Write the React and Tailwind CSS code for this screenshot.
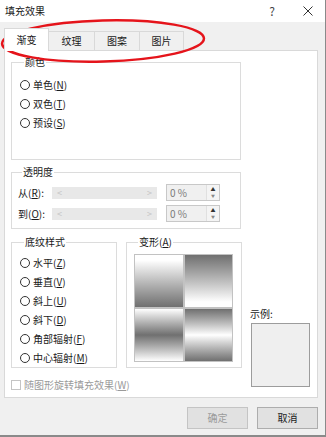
import { useState } from "react";

const FONT = { fontFamily: '"Noto Sans CJK SC", "Microsoft YaHei", sans-serif' };

function Radio({ label, hot }) {
  return (
    <div className="flex items-center h-[19px]">
      <span className="w-[10px] h-[10px] rounded-full border border-[#333333] bg-white mr-[3px] shrink-0"></span>
      <span>
        {label}(<u>{hot}</u>)
      </span>
    </div>
  );
}

function Group({ title, className, children }) {
  return (
    <fieldset className={`border border-[#dcdcdc] ${className}`}>
      <legend className="ml-[4px] px-[1px] text-[10px] leading-[14px]">{title}</legend>
      {children}
    </fieldset>
  );
}

function SliderRow({ label, hot }) {
  return (
    <div className="flex items-center h-[21px]">
      <span className="w-[34px]">
        {label}(<u>{hot}</u>):
      </span>
      <div className="w-[105px] h-[12px] bg-[#e8e8e8] flex items-center justify-between px-[5px] text-[#c4c4c4] text-[9px] leading-none">
        <span>&lt;</span>
        <span>&gt;</span>
      </div>
      <div className="ml-[9px] w-[54px] h-[17px] border border-[#c8c8c8] bg-[#f0f0f0] flex">
        <span className="flex-1 pl-[3px] text-[#7a7a7a] leading-[15px]">0 %</span>
        <div className="w-[13px] flex flex-col border-l border-[#e0e0e0] bg-[#f4f4f4]">
          <div className="flex-1 flex items-center justify-center text-[5px] text-[#333] leading-none">▲</div>
          <div className="flex-1 flex items-center justify-center text-[4px] text-[#888] leading-none">▼</div>
        </div>
      </div>
    </div>
  );
}

export default function App() {
  const [tab] = useState("渐变");
  const tabs = [
    { name: "渐变", w: "w-[45px]" },
    { name: "纹理", w: "w-[46px]" },
    { name: "图案", w: "w-[45px]" },
    { name: "图片", w: "w-[44px]" },
  ];

  return (
    <div
      className="relative w-[326px] h-[437px] bg-[#f0f0f0] border-r border-b-2 border-[#8a8a8a] text-[10px] leading-[14px] text-[#1a1a1a] overflow-hidden"
      style={FONT}
    >
      {/* title bar */}
      <div className="h-[22px] bg-white flex items-center pl-[5px] pr-[12px]">
        <span className="flex-1">填充效果</span>
        <span className="text-[12px] text-[#444] mr-[28px]">?</span>
        <svg width="10" height="10" viewBox="0 0 10 10" className="mb-[1px]">
          <path d="M0.5 0.5 L9.5 9.5 M9.5 0.5 L0.5 9.5" stroke="#333" strokeWidth="1" />
        </svg>
      </div>

      {/* tabs */}
      <div className="flex items-end mt-[6px] mx-[4px] h-[22px]">
        {tabs.map((t) =>
          t.name === tab ? (
            <div
              key={t.name}
              className={`${t.w} h-[23px] -mb-[1px] relative z-10 bg-white border border-b-0 border-[#d9d9d9] flex items-center justify-center`}
            >
              {t.name}
            </div>
          ) : (
            <div
              key={t.name}
              className={`${t.w} h-[19px] bg-[#f0f0f0] border border-l-0 border-b-0 border-[#d9d9d9] flex items-center justify-center`}
            >
              {t.name}
            </div>
          )
        )}
      </div>

      {/* panel */}
      <div className="mx-[4px] w-[314px] h-[348px] bg-white border border-[#d9d9d9] pl-[6px] pt-[4px]">
        <Group title="颜色" className="w-[230px] h-[105px] pl-[8px] pt-[6px]">
          <Radio label="单色" hot="N" />
          <Radio label="双色" hot="T" />
          <Radio label="预设" hot="S" />
        </Group>

        <Group title="透明度" className="w-[230px] h-[64px] mt-[5px] pl-[6px] pt-[3px]">
          <SliderRow label="从" hot="R" />
          <SliderRow label="到" hot="O" />
        </Group>

        <div className="flex mt-[6px]">
          <div className="flex flex-col">
            <div className="flex">
              <Group title="底纹样式" className="w-[106px] h-[133px] pl-[8px] pt-[4px]">
                <Radio label="水平" hot="Z" />
                <Radio label="垂直" hot="V" />
                <Radio label="斜上" hot="U" />
                <Radio label="斜下" hot="D" />
                <Radio label="角部辐射" hot="F" />
                <Radio label="中心辐射" hot="M" />
              </Group>
              <Group title={<>变形(<u>A</u>)</>} className="ml-[9px] w-[116px] h-[133px] pl-[7px] pt-[5px]">
                <div className="w-[99px] h-[108px] grid grid-cols-2 grid-rows-2 gap-[2px] p-[1px] bg-[#c2c2c2]">
                  <div className="bg-linear-to-b from-white from-10% to-[#707070]"></div>
                  <div className="bg-linear-to-b from-[#707070] to-white to-90%"></div>
                  <div className="bg-linear-to-b from-white via-[#707070] to-white"></div>
                  <div className="bg-linear-to-b from-[#707070] via-white to-[#707070]"></div>
                </div>
              </Group>
            </div>
            <div className="flex items-center mt-[10px] text-[#9a9a9a]">
              <span className="w-[10px] h-[10px] border border-[#c4c4c4] bg-white mr-[3px]"></span>
              <span>
                随图形旋转填充效果(<u>W</u>)
              </span>
            </div>
          </div>

          <div className="ml-[7px] mt-[72px] flex flex-col">
            <span className="pl-[1px]">示例:</span>
            <div className="mt-[2px] ml-[2px] w-[59px] h-[64px] bg-[#efefef] border border-[#9c9c9c]"></div>
          </div>
        </div>
      </div>

      {/* buttons */}
      <div className="flex justify-end gap-[9px] mt-[9px] pr-[7px]">
        <button className="w-[61px] h-[22px] bg-[#e1e1e1] border border-[#c4c4c4] text-[#9a9a9a]">确定</button>
        <button className="w-[61px] h-[22px] bg-[#e1e1e1] border border-[#adadad] text-[#1a1a1a]">取消</button>
      </div>

      {/* red annotation ellipse */}
      <svg className="absolute left-0 top-0 pointer-events-none" width="326" height="80">
        <ellipse cx="103" cy="41" rx="101" ry="20.5" fill="none" stroke="#e5141b" strokeWidth="2.5" transform="rotate(-1.5 103 41)" />
      </svg>
    </div>
  );
}
